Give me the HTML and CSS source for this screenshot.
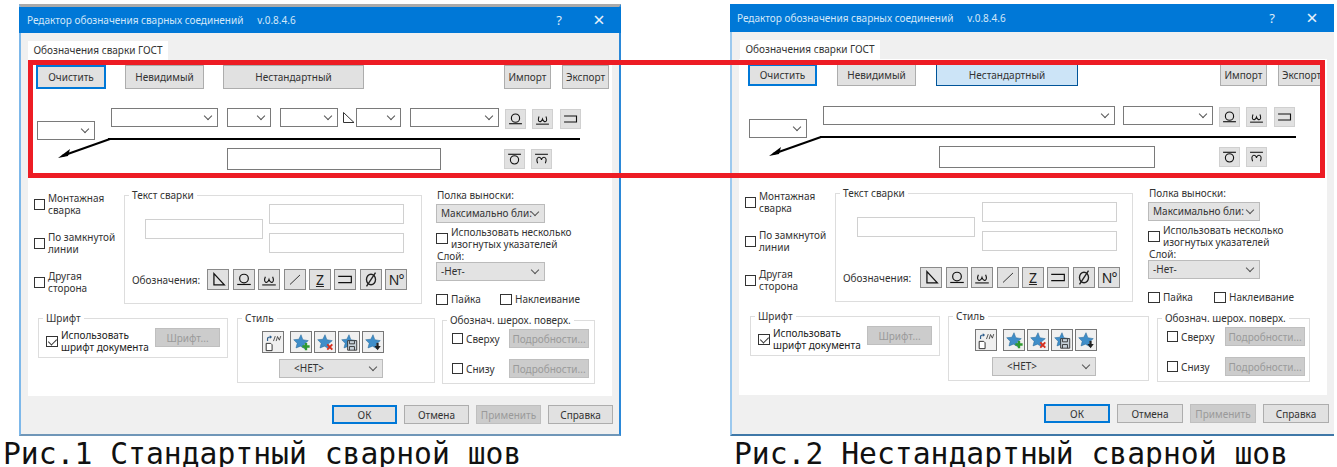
FILE: index.html
```html
<!DOCTYPE html>
<html lang="ru">
  <head>
    <meta charset="UTF-8" />
    <title>Редактор обозначения сварных соединений</title>
    <link rel="stylesheet" href="styles.css">
  </head>
  <body>
    <svg class="sprite" width="0" height="0">
      <symbol id="i-angle" viewBox="0 0 18 19"><path d="M5.5 4.5V14.5H16L5.5 4.5Z" fill="none" stroke="#333" stroke-width="1"/></symbol>
      <symbol id="i-tri" viewBox="0 0 22 21"><path d="M6.5 4V16.5H18L6.5 4Z" fill="none" stroke="#111" stroke-width="1.4"/></symbol>
      <symbol id="i-circ" viewBox="0 0 22 21"><circle cx="11" cy="9.5" r="4.8" fill="none" stroke="#111" stroke-width="1.3"/><path d="M3.5 16H18.5" stroke="#111" stroke-width="1.3"/></symbol>
      <symbol id="i-omega" viewBox="0 0 22 21"><path d="M7 7.5C4 14.5 9.5 15.5 11 10.5C12.5 15.5 18 14.5 15 7.5" fill="none" stroke="#111" stroke-width="1.2"/><path d="M3.5 16.5H18.5" stroke="#111" stroke-width="1.2"/></symbol>
      <symbol id="i-slash" viewBox="0 0 22 21"><path d="M5.5 16L16.5 5.5" stroke="#333" stroke-width="1.1"/></symbol>
      <symbol id="i-bracket" viewBox="0 0 22 21"><path d="M3.5 7H18V14H3.5" fill="none" stroke="#111" stroke-width="1.3"/></symbol>
      <symbol id="i-phi" viewBox="0 0 22 21"><ellipse cx="11" cy="10.5" rx="5" ry="5.8" fill="none" stroke="#222" stroke-width="1.5"/><path d="M6 18L16 3" stroke="#222" stroke-width="1.5"/></symbol>
      <symbol id="i-circ-top" viewBox="0 0 22 21"><path d="M3.5 5H18.5" stroke="#111" stroke-width="1.3"/><circle cx="11" cy="11.5" r="4.8" fill="none" stroke="#111" stroke-width="1.3"/></symbol>
      <symbol id="i-omega-top" viewBox="0 0 22 21"><path d="M3.5 5H18.5" stroke="#111" stroke-width="1.2"/><path d="M6.5 15.5C3.5 7.5 10 6.5 11 11.5C12 6.5 18.5 7.5 15.5 15.5" fill="none" stroke="#111" stroke-width="1.2"/></symbol>
      <symbol id="i-doc" viewBox="0 0 22 22"><path d="M3.5 12.5H8.5L10 14V20.5H3.5Z" fill="#fff" stroke="#222"/><path d="M5 10V7.5C5 6 6 5.5 8 5.5" fill="none" stroke="#2c5d8c" stroke-width="1.3"/><path d="M7.5 3.5L10 5.5L7.5 7.5Z" fill="#2c5d8c"/><path d="M11.5 10L13.5 4.5M14.5 10L16 5L18 9L19.5 4.5" fill="none" stroke="#333" stroke-width=".9"/></symbol>
      <symbol id="i-star" viewBox="0 0 22 22"><path d="M11 3L13 8.5L19 9.5L14.5 13.2L15.5 18.5L10.5 15.6L5.5 17.5L6.8 12.5L3 8.5L8.6 8Z" fill="#3f8ec9" stroke="#2a6a99" stroke-width=".6"/></symbol>
      <symbol id="i-star-add" viewBox="0 0 22 22"><use href="#i-star"/><path d="M16.5 12V20M12.5 16H20.5" stroke="#2f9a2f" stroke-width="2.6"/></symbol>
      <symbol id="i-star-del" viewBox="0 0 22 22"><use href="#i-star"/><path d="M13.5 13.5L19 19.5M19 13.5L13.5 19.5" stroke="#d9301f" stroke-width="2.1"/></symbol>
      <symbol id="i-star-save" viewBox="0 0 22 22"><use href="#i-star"/><path d="M9.5 9.5H19.5V20H9.5Z" fill="#c8d2da" stroke="#333"/><path d="M11.5 10V13H17V10M11.5 20V16H17V20" fill="none" stroke="#333"/></symbol>
      <symbol id="i-star-down" viewBox="0 0 22 22"><use href="#i-star"/><path d="M16 12V16" stroke="#222" stroke-width="2.4"/><path d="M12.5 15.5H19.5L16 20Z" fill="#222"/></symbol>
    </svg>

    <div class="figure figure-std">
      <div class="win">
        <div class="titlebar">
          <span class="title">Редактор обозначения сварных соединений</span>
          <span class="version">v.0.8.4.6</span>
          <span class="help">?</span>
          <span class="close">&times;</span>
        </div>
        <div class="tabs"><span class="tab">Обозначения сварки ГОСТ</span></div>
        <div class="panel">
          <div class="top-row">
            <button class="btn btn-focus btn-clear">Очистить</button>
            <button class="btn btn-hidden">Невидимый</button>
            <button class="btn btn-custom">Нестандартный</button>
            <button class="btn btn-io btn-import">Импорт</button>
            <button class="btn btn-io">Экспорт</button>
          </div>
          <div class="weld-form">
            <svg class="leader" width="56" height="24" viewBox="0 0 56 24"><path d="M53 3L5 20" stroke="#000" stroke-width="2"/><path d="M1 22L13 13L11 20Z" fill="#000"/></svg>
            <div class="weld-left"><div class="combo combo-side"></div></div>
            <div class="weld-main">
              <div class="symbol-row">
                <div class="combo w-107"></div>
                <div class="combo w-44"></div>
                <div class="combo w-58"></div>
                <svg class="angle" width="18" height="19"><use href="#i-angle"/></svg>
                <div class="combo w-45"></div>
                <div class="combo w-89"></div>
                <button class="ibtn"><svg><use href="#i-circ"/></svg></button>
                <button class="ibtn"><svg><use href="#i-omega"/></svg></button>
                <button class="ibtn ibtn-last"><svg><use href="#i-bracket"/></svg></button>
              </div>
              <div class="shelf"></div>
              <div class="under-row">
                <input class="field field-under" />
                <button class="ibtn ibtn-under"><svg><use href="#i-circ-top"/></svg></button>
                <button class="ibtn"><svg><use href="#i-omega-top"/></svg></button>
              </div>
            </div>
          </div>

          <div class="lower">
            <div class="check-col">
              <label class="check"><span class="box"></span><span>Монтажная<br />сварка</span></label>
              <label class="check"><span class="box"></span><span>По замкнутой<br />линии</span></label>
              <label class="check"><span class="box"></span><span>Другая<br />сторона</span></label>
            </div>
            <fieldset class="group group-text">
              <legend>Текст сварки</legend>
              <div class="text-fields">
                <input class="field field-main" />
                <div class="text-side">
                  <input class="field field-side" />
                  <input class="field field-side" />
                </div>
              </div>
              <div class="marks">
                <span class="marks-label">Обозначения:</span>
                <button class="ibtn mark"><svg><use href="#i-tri"/></svg></button>
                <button class="ibtn mark"><svg><use href="#i-circ"/></svg></button>
                <button class="ibtn mark"><svg><use href="#i-omega"/></svg></button>
                <button class="ibtn mark"><svg><use href="#i-slash"/></svg></button>
                <button class="ibtn mark mark-z">Z</button>
                <button class="ibtn mark"><svg><use href="#i-bracket"/></svg></button>
                <button class="ibtn mark"><svg><use href="#i-phi"/></svg></button>
                <button class="ibtn mark mark-n">N°</button>
              </div>
            </fieldset>
            <div class="side-col">
              <div class="side-label">Полка выноски:</div>
              <div class="combo combo-fill combo-polka">Максимально бли:</div>
              <label class="check check-many"><span class="box"></span><span>Использовать несколько<br />изогнутых указателей</span></label>
              <div class="side-label">Слой:</div>
              <div class="combo combo-fill">-Нет-</div>
              <div class="side-checks">
                <label class="check check-solder"><span class="box"></span><span>Пайка</span></label>
                <label class="check"><span class="box"></span><span>Наклеивание</span></label>
              </div>
            </div>
          </div>

          <div class="bottom">
            <fieldset class="group group-font">
              <legend>Шрифт</legend>
              <div class="font-row">
                <label class="check check-doc"><span class="box box-on"></span><span>Использовать<br />шрифт документа</span></label>
                <button class="btn btn-off btn-font">Шрифт...</button>
              </div>
            </fieldset>
            <fieldset class="group group-style">
              <legend>Стиль</legend>
              <div class="style-icons">
                <button class="sbtn sbtn-doc"><svg><use href="#i-doc"/></svg></button>
                <button class="sbtn"><svg><use href="#i-star-add"/></svg></button>
                <button class="sbtn"><svg><use href="#i-star-del"/></svg></button>
                <button class="sbtn"><svg><use href="#i-star-save"/></svg></button>
                <button class="sbtn"><svg><use href="#i-star-down"/></svg></button>
              </div>
              <div class="combo combo-fill combo-style">&lt;НЕТ&gt;</div>
            </fieldset>
            <fieldset class="group group-rough">
              <legend>Обознач. шерох. поверх.</legend>
              <div class="rough-row">
                <label class="check check-rough"><span class="box"></span><span>Сверху</span></label>
                <button class="btn btn-off btn-more">Подробности...</button>
              </div>
              <div class="rough-row">
                <label class="check check-rough"><span class="box"></span><span>Снизу</span></label>
                <button class="btn btn-off btn-more">Подробности...</button>
              </div>
            </fieldset>
          </div>
        </div>
        <div class="footer">
          <button class="btn btn-focus btn-foot">ОК</button>
          <button class="btn btn-foot">Отмена</button>
          <button class="btn btn-off btn-foot">Применить</button>
          <button class="btn btn-foot">Справка</button>
        </div>
      </div>
      <div class="caption">Рис.1 Стандартный сварной шов</div>
    </div>

    <div class="figure figure-alt">
      <div class="win">
        <div class="titlebar">
          <span class="title">Редактор обозначения сварных соединений</span>
          <span class="version">v.0.8.4.6</span>
          <span class="help">?</span>
          <span class="close">&times;</span>
        </div>
        <div class="tabs"><span class="tab">Обозначения сварки ГОСТ</span></div>
        <div class="panel">
          <div class="top-row">
            <button class="btn btn-focus btn-clear">Очистить</button>
            <button class="btn btn-hidden">Невидимый</button>
            <button class="btn btn-custom btn-pressed">Нестандартный</button>
            <button class="btn btn-io btn-import">Импорт</button>
            <button class="btn btn-io">Экспорт</button>
          </div>
          <div class="weld-form">
            <svg class="leader" width="56" height="24" viewBox="0 0 56 24"><path d="M53 3L5 20" stroke="#000" stroke-width="2"/><path d="M1 22L13 13L11 20Z" fill="#000"/></svg>
            <div class="weld-left"><div class="combo combo-side"></div></div>
            <div class="weld-main">
              <div class="symbol-row">
                <div class="combo w-292"></div>
                <div class="combo w-90"></div>
                <button class="ibtn"><svg><use href="#i-circ"/></svg></button>
                <button class="ibtn"><svg><use href="#i-omega"/></svg></button>
                <button class="ibtn ibtn-last"><svg><use href="#i-bracket"/></svg></button>
              </div>
              <div class="shelf"></div>
              <div class="under-row">
                <input class="field field-under" />
                <button class="ibtn ibtn-under"><svg><use href="#i-circ-top"/></svg></button>
                <button class="ibtn"><svg><use href="#i-omega-top"/></svg></button>
              </div>
            </div>
          </div>

          <div class="lower">
            <div class="check-col">
              <label class="check"><span class="box"></span><span>Монтажная<br />сварка</span></label>
              <label class="check"><span class="box"></span><span>По замкнутой<br />линии</span></label>
              <label class="check"><span class="box"></span><span>Другая<br />сторона</span></label>
            </div>
            <fieldset class="group group-text">
              <legend>Текст сварки</legend>
              <div class="text-fields">
                <input class="field field-main" />
                <div class="text-side">
                  <input class="field field-side" />
                  <input class="field field-side" />
                </div>
              </div>
              <div class="marks">
                <span class="marks-label">Обозначения:</span>
                <button class="ibtn mark"><svg><use href="#i-tri"/></svg></button>
                <button class="ibtn mark"><svg><use href="#i-circ"/></svg></button>
                <button class="ibtn mark"><svg><use href="#i-omega"/></svg></button>
                <button class="ibtn mark"><svg><use href="#i-slash"/></svg></button>
                <button class="ibtn mark mark-z">Z</button>
                <button class="ibtn mark"><svg><use href="#i-bracket"/></svg></button>
                <button class="ibtn mark"><svg><use href="#i-phi"/></svg></button>
                <button class="ibtn mark mark-n">N°</button>
              </div>
            </fieldset>
            <div class="side-col">
              <div class="side-label">Полка выноски:</div>
              <div class="combo combo-fill combo-polka">Максимально бли:</div>
              <label class="check check-many"><span class="box"></span><span>Использовать несколько<br />изогнутых указателей</span></label>
              <div class="side-label">Слой:</div>
              <div class="combo combo-fill">-Нет-</div>
              <div class="side-checks">
                <label class="check check-solder"><span class="box"></span><span>Пайка</span></label>
                <label class="check"><span class="box"></span><span>Наклеивание</span></label>
              </div>
            </div>
          </div>

          <div class="bottom">
            <fieldset class="group group-font">
              <legend>Шрифт</legend>
              <div class="font-row">
                <label class="check check-doc"><span class="box box-on"></span><span>Использовать<br />шрифт документа</span></label>
                <button class="btn btn-off btn-font">Шрифт...</button>
              </div>
            </fieldset>
            <fieldset class="group group-style">
              <legend>Стиль</legend>
              <div class="style-icons">
                <button class="sbtn sbtn-doc"><svg><use href="#i-doc"/></svg></button>
                <button class="sbtn"><svg><use href="#i-star-add"/></svg></button>
                <button class="sbtn"><svg><use href="#i-star-del"/></svg></button>
                <button class="sbtn"><svg><use href="#i-star-save"/></svg></button>
                <button class="sbtn"><svg><use href="#i-star-down"/></svg></button>
              </div>
              <div class="combo combo-fill combo-style">&lt;НЕТ&gt;</div>
            </fieldset>
            <fieldset class="group group-rough">
              <legend>Обознач. шерох. поверх.</legend>
              <div class="rough-row">
                <label class="check check-rough"><span class="box"></span><span>Сверху</span></label>
                <button class="btn btn-off btn-more">Подробности...</button>
              </div>
              <div class="rough-row">
                <label class="check check-rough"><span class="box"></span><span>Снизу</span></label>
                <button class="btn btn-off btn-more">Подробности...</button>
              </div>
            </fieldset>
          </div>
        </div>
        <div class="footer">
          <button class="btn btn-focus btn-foot">ОК</button>
          <button class="btn btn-foot">Отмена</button>
          <button class="btn btn-off btn-foot">Применить</button>
          <button class="btn btn-foot">Справка</button>
        </div>
      </div>
      <div class="caption">Рис.2 Нестандартный сварной шов</div>
    </div>

    <div class="red-frame"></div>
  </body>
</html>
```

FILE: styles.css
```css
* {
  box-sizing: border-box;
}

html,
body {
  margin: 0;
  padding: 0;
  height: 467px;
  overflow: hidden;
  background-color: #fff;
}

body {
  position: relative;
  font-family: "Noto Sans", sans-serif;
  font-size: 10px;
  line-height: 12px;
  color: #333;
}

.sprite {
  position: absolute;
}

/* the two dialogs sit on a free canvas */
.figure {
  position: absolute;
  top: 4px;
}

.figure-std {
  left: 0;
  width: 625px;
}

.figure-alt {
  left: 730px;
  width: 607px;
}

.red-frame {
  position: absolute;
  left: 28px;
  top: 60px;
  width: 1297px;
  height: 118px;
  border: 5px solid #ed1c24;
}

.win {
  display: flex;
  flex-direction: column;
  background-color: #f0f0f0;
  height: 432px;
}

.figure-std .win {
  width: 602px;
  margin-left: 19px;
  border-top: 3px solid #aaa;
  border-left: 2px solid #7db8ea;
  border-right: 2px solid #2b88d8;
  border-bottom: 2px solid #6f96b8;
}

.figure-alt .win {
  width: 604px;
  border-left: 2px solid #9cc9ee;
  border-bottom: 2px solid #3f78a8;
}

.titlebar {
  display: flex;
  align-items: center;
  flex-shrink: 0;
  height: 26px;
  margin-left: -2px;
  padding-left: 8px;
  background-color: #0078d7;
  color: #d3e7f8;
  font-size: 10px;
}

.figure-std .titlebar {
  margin-right: -2px;
}

.figure-alt .titlebar {
  height: 28px;
  padding-left: 7px;
}

.version {
  margin-left: 14px;
}

.help {
  margin-left: auto;
  font-size: 13px;
  color: #dcebf9;
}

.close {
  width: 44px;
  margin-left: 15px;
  text-align: center;
  font-size: 20px;
  color: #e4f0fa;
}

.tabs {
  display: flex;
  flex-shrink: 0;
  height: 27px;
  padding: 8px 0 0 7px;
}

.figure-alt .tabs {
  padding-left: 8px;
}

.tab {
  width: 140px;
  padding-top: 3px;
  text-align: center;
  background-color: #fff;
}

.panel {
  flex-shrink: 0;
  width: 584px;
  height: 336px;
  margin-left: 7px;
  background-color: #fff;
}

.figure-alt .panel {
  width: 588px;
}

.btn {
  padding: 0;
  border: 1px solid #adadad;
  background-color: #e1e1e1;
  font-family: inherit;
  font-size: 10px;
  color: #333;
}

.btn-focus {
  border: 2px solid #0078d7;
}

.btn-off {
  border-color: #bfbfbf;
  background-color: #ccc;
  color: #9a9a9a;
}

.top-row {
  display: flex;
  height: 29px;
  padding: 5px 3px 0 8px;
}

.figure-alt .top-row {
  height: 27px;
  padding: 5px 2px 0 9px;
}

.btn-clear {
  width: 70px;
}

.figure-alt .btn-clear {
  width: 69px;
}

.btn-hidden {
  width: 79px;
  margin-left: 19px;
}

.figure-alt .btn-hidden {
  margin-left: 20px;
}

.btn-custom {
  width: 141px;
  margin-left: 19px;
}

.figure-alt .btn-custom {
  width: 142px;
  margin-left: 20px;
}

.btn-pressed {
  border-color: #005499;
  background-color: #cce4f7;
}

.btn-io {
  width: 47px;
}

.btn-import {
  margin-left: auto;
  margin-right: 11px;
}

.weld-form {
  position: relative;
  display: flex;
  margin-top: 19px;
  padding-left: 8px;
}

.figure-alt .weld-form {
  margin-top: 20px;
  padding-left: 9px;
}

/* the leader arrow lies over the form */
.leader {
  position: absolute;
  left: 29px;
  top: 28px;
}

.weld-left {
  width: 75px;
}

.combo {
  position: relative;
  flex-shrink: 0;
  height: 19px;
  padding-left: 4px;
  border: 1px solid #7a7a7a;
  background-color: #fff;
  line-height: 17px;
}

/* the chevron */
.combo::after {
  content: "";
  position: absolute;
  right: 6px;
  top: 4px;
  width: 5px;
  height: 5px;
  border-right: 1px solid #555;
  border-bottom: 1px solid #555;
  transform: rotate(45deg);
}

.combo-side {
  width: 58px;
  margin: 13px 0 0 1px;
}

.symbol-row {
  display: flex;
  align-items: flex-start;
  gap: 9px;
  height: 21px;
}

.figure-alt .symbol-row {
  gap: 8px;
}

.w-107 {
  width: 107px;
}

.w-44 {
  width: 44px;
}

.w-58 {
  width: 58px;
}

.w-45 {
  width: 45px;
}

.w-89 {
  width: 89px;
}

.w-292 {
  width: 292px;
}

.w-90 {
  width: 90px;
}

.angle {
  flex-shrink: 0;
  margin: 0 -9px;
}

.ibtn {
  flex-shrink: 0;
  width: 21px;
  height: 20px;
  padding: 0;
  border: 1px solid #d0d0d0;
  background-color: #e1e1e1;
  font-family: inherit;
  color: #222;
}

.ibtn svg {
  display: block;
  width: 100%;
  height: 100%;
}

.symbol-row .ibtn {
  margin: 1px 0 0 -3px;
}

.figure-alt .symbol-row .ibtn {
  margin-left: -2px;
}

.symbol-row .ibtn-last {
  margin-left: -2px;
}

.figure-alt .symbol-row .ibtn-last {
  margin-left: -1px;
}

.shelf {
  width: 472px;
  height: 2px;
  margin: 9px 0 8px -3px;
  background-color: #000;
}

.figure-alt .shelf {
  width: 476px;
}

.under-row {
  display: flex;
  gap: 6px;
  margin-left: 116px;
}

.under-row .ibtn {
  margin-top: 1px;
}

.field {
  display: block;
  padding: 0;
  border: 1px solid #d0d0d0;
  background-color: #fff;
}

.field-under {
  width: 214px;
  height: 22px;
  border-color: #7a7a7a;
}

.figure-alt .field-under {
  width: 216px;
}

.ibtn-under {
  margin-left: 57px;
}

.figure-alt .ibtn-under {
  margin-left: 58px;
}

.lower {
  display: flex;
  margin-top: 19px;
  padding-left: 6px;
}

.check-col {
  display: flex;
  flex-direction: column;
  gap: 15px;
  width: 90px;
  padding-top: 3px;
}

.check {
  display: flex;
  align-items: center;
  gap: 3px;
}

.box {
  flex-shrink: 0;
  position: relative;
  width: 11px;
  height: 11px;
  border: 1px solid #333;
  background-color: #fff;
}

.box-on::after {
  content: "";
  position: absolute;
  left: 3px;
  top: 0;
  width: 4px;
  height: 7px;
  border-right: 1px solid #333;
  border-bottom: 1px solid #333;
  transform: rotate(45deg);
}

.side-col .box,
.check-doc .box {
  width: 12px;
}

.group {
  margin: 0;
  padding: 0;
  border: 1px solid #ddd;
}

.group legend {
  margin-left: 4px;
  padding: 0 3px;
  line-height: 12px;
}

.group-text {
  width: 298px;
  height: 115px;
}

.text-fields {
  display: flex;
  align-items: center;
  gap: 6px;
  padding: 3px 0 0 20px;
}

.figure-alt .text-fields {
  gap: 7px;
  padding-left: 21px;
}

.field-main {
  width: 118px;
  height: 20px;
}

.text-side {
  display: flex;
  flex-direction: column;
  gap: 9px;
}

.field-side {
  width: 135px;
  height: 20px;
}

.marks {
  display: flex;
  align-items: center;
  gap: 3.4px;
  margin: 16px 0 0 7px;
}

.marks-label {
  width: 72px;
}

.figure-alt .marks-label {
  width: 74px;
}

.mark {
  width: 22px;
  height: 21px;
  border-color: #8a8a8a;
}

.mark-z {
  font-size: 14px;
  line-height: 15px;
  text-decoration: underline;
}

.mark-n {
  font-size: 14px;
  letter-spacing: -1px;
}

.side-col {
  width: 165px;
  margin-left: 14px;
}

.figure-alt .side-col {
  margin-left: 15px;
}

.side-label {
  padding-left: 1px;
}

.combo-fill {
  width: 109px;
  border-color: #bbb;
  background-color: #e3e3e3;
}

.figure-alt .combo-fill {
  width: 112px;
}

.combo-polka {
  margin-top: 3px;
}

.check-many {
  margin-top: 3px;
}

.side-checks {
  display: flex;
  margin-top: 12px;
}

.check-solder {
  width: 64px;
}

.figure-alt .check-solder {
  width: 66px;
}

.bottom {
  display: flex;
  align-items: flex-start;
  margin-top: 7px;
  padding-left: 10px;
}

.figure-alt .bottom {
  padding-left: 11px;
}

.group-font {
  width: 190px;
  height: 46px;
}

.font-row {
  display: flex;
  justify-content: space-between;
  align-items: flex-start;
  padding: 4px 7px 0 7px;
}

.check-doc {
  color: #222;
  margin-top: 1px;
}

.btn-font {
  width: 65px;
  height: 19px;
}

.group-style {
  width: 198px;
  height: 71px;
  margin-left: 9px;
}

.figure-alt .group-style {
  width: 201px;
  margin-left: 8px;
}

.style-icons {
  display: flex;
  gap: 2px;
  margin: 7px 0 0 24px;
}

.figure-alt .style-icons {
  margin-left: 26px;
}

.sbtn {
  width: 22px;
  height: 22px;
  padding: 0;
  border: 1px solid #777;
  background-color: #f0f0f0;
}

.sbtn svg {
  display: block;
  width: 100%;
  height: 100%;
}

.sbtn-doc {
  margin-right: 4px;
}

.combo-style {
  width: 104px;
  margin: 6px 0 0 41px;
  padding-left: 14px;
}

.figure-alt .combo-style {
  width: 104px;
  margin-left: 43px;
}

.group-rough {
  width: 153px;
  height: 70px;
  margin: 2px 0 0 7px;
}

.figure-alt .group-rough {
  margin-left: 8px;
}

.rough-row {
  display: flex;
  align-items: center;
  margin-top: 3px;
  padding-left: 9px;
}

.rough-row + .rough-row {
  margin-top: 11px;
}

.check-rough {
  width: 57px;
}

.figure-alt .check-rough {
  width: 58px;
}

.btn-more {
  width: 80px;
  height: 19px;
}

.footer {
  display: flex;
  justify-content: flex-end;
  gap: 7px;
  padding: 9px 6px 0 0;
}

.figure-alt .footer {
  padding-right: 5px;
}

.btn-foot {
  width: 65px;
  height: 19px;
}

.figure-alt .btn-foot {
  width: 66px;
}

.caption {
  font-family: "DejaVu Sans Mono", monospace;
  font-size: 29.7px;
  line-height: 30px;
  color: #111;
  margin-top: 3px;
  padding-left: 3px;
  white-space: nowrap;
}

.figure-alt .caption {
  padding-left: 4px;
}
```
